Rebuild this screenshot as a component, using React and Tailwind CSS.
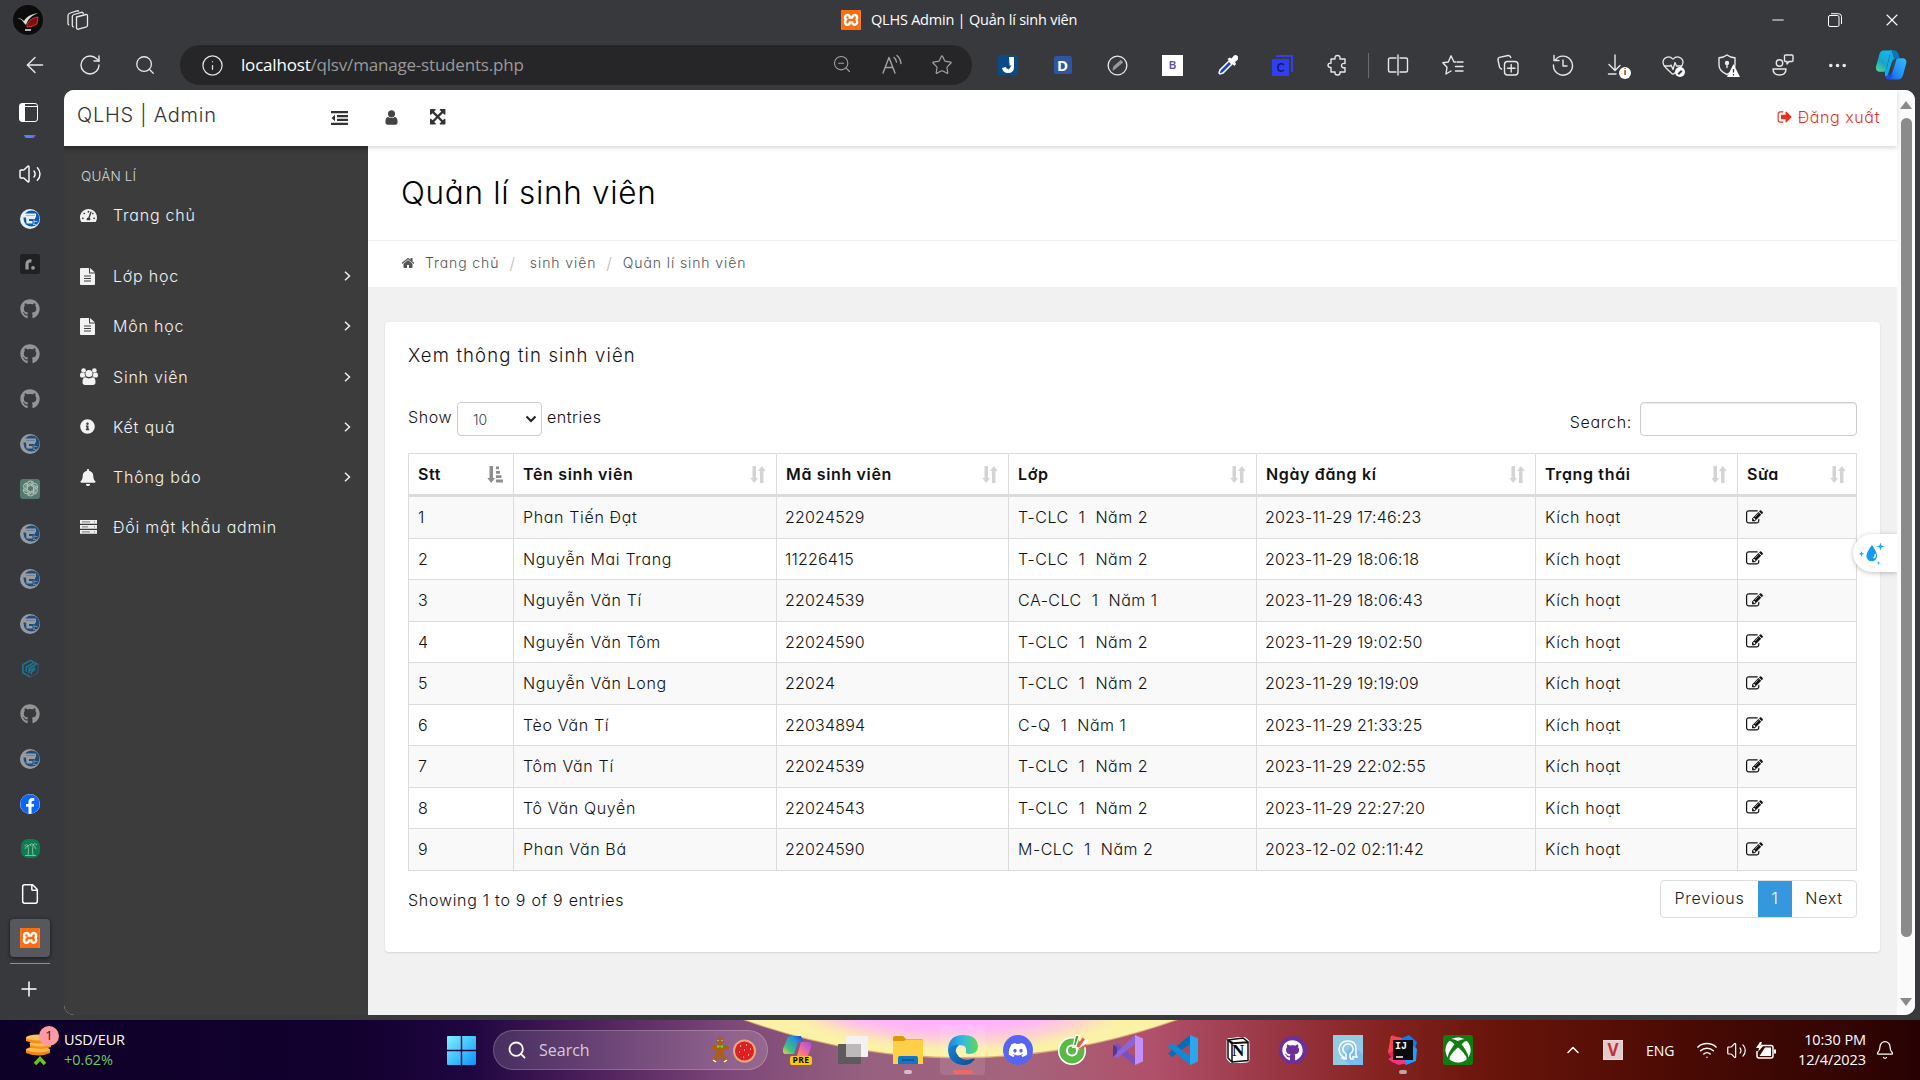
import React from "react";
import {
  ArrowLeft, RotateCw, Search, Info, ZoomOut, Star, HeartPulse, Ellipsis,
  Minus, X, Volume2, File, Plus, Wifi, Bell, ChevronUp,
} from "lucide-react";
import { FaGithub, FaDiscord, FaXbox, FaFacebook, FaTachometerAlt, FaInfoCircle, FaBell } from "react-icons/fa";
import { SiXampp } from "react-icons/si";

/* ---------- Admin page glyphs (1792-unit grid) ---------- */
const Glyph = ({ d, className }) => (
  <svg viewBox="0 0 1792 1792" fill="currentColor" className={className}><path d={d} /></svg>
);
const EDIT = "M888 1184l116-116-152-152-116 116v56h96v96h56zm440-720q-16-16-33 1l-350 350q-17 17-1 33t33-1l350-350q17-17 1-33zm80 594v190q0 119-84.5 203.5t-203.5 84.5h-832q-119 0-203.5-84.5t-84.5-203.5v-832q0-119 84.5-203.5t203.5-84.5h832q63 0 117 25 15 7 18 23 3 17-9 29l-49 49q-14 14-32 8-23-6-45-6h-832q-66 0-113 47t-47 113v832q0 66 47 113t113 47h832q66 0 113-47t47-113v-126q0-13 9-22l64-64q15-15 35-7t20 29zm-96-738l288 288-672 672h-288v-288zm444 132l-92 92-288-288 92-92q28-28 68-28t68 28l152 152q28 28 28 68t-28 68z";
const SIGNOUT = "M704 1440q0 4 1 20t.5 26.5-3 23.5-10 19.5-20.5 6.5h-320q-119 0-203.5-84.5t-84.5-203.5v-704q0-119 84.5-203.5t203.5-84.5h320q13 0 22.5 9.5t9.5 22.5q0 4 1 20t.5 26.5-3 23.5-10 19.5-20.5 6.5h-320q-66 0-113 47t-47 113v704q0 66 47 113t113 47h312l11.5 1 11.5 3 8 5.5 7 9 2 13.5zm928-544q0 26-19 45l-544 544q-19 19-45 19t-45-19-19-45v-288h-448q-26 0-45-19t-19-45v-384q0-26 19-45t45-19h448v-288q0-26 19-45t45-19 45 19l544 544q19 19 19 45z";
const HOME = "M1472 992v480q0 26-19 45t-45 19h-384v-384h-256v384h-384q-26 0-45-19t-19-45v-480q0-1 .5-3t.5-3l575-474 575 474q1 2 1 6zm223-69l-62 74q-8 9-21 11h-3q-13 0-21-7l-692-577-692 577q-12 8-24 7-13-2-21-11l-62-74q-8-10-7-23.5t11-21.5l719-599q32-26 76-26t76 26l244 204v-195q0-14 9-23t23-9h192q14 0 23 9t9 23v408l219 182q10 8 11 21.5t-7 23.5z";
const USER = "M1536 1399q0 109-62.5 187t-150.5 78h-854q-88 0-150.5-78t-62.5-187q0-85 8.5-160.5t31.5-152 58.5-131 94-89 134.5-34.5q131 128 313 128t313-128q76 0 134.5 34.5t94 89 58.5 131 31.5 152 8.5 160.5zm-256-887q0 159-112.5 271.5t-271.5 112.5-271.5-112.5-112.5-271.5 112.5-271.5 271.5-112.5 271.5 112.5 112.5 271.5z";
const ARROWS = "M1283 413l-355 355 355 355 144-144q29-31 70-14 39 17 39 59v448q0 26-19 45t-45 19h-448q-42 0-59-40-17-39 14-69l144-144-355-355-355 355 144 144q31 30 14 69-17 40-59 40h-448q-26 0-45-19t-19-45v-448q0-42 40-59 39-17 69 14l144 144 355-355-355-355-144 144q-19 19-45 19-12 0-24-5-40-17-40-59v-448q0-26 19-45t45-19h448q42 0 59 40 17 39-14 69l-144 144 355 355 355-355-144-144q-31-30-14-69 17-40 59-40h448q26 0 45 19t19 45v448q0 42-39 59-13 5-25 5-26 0-45-19z";

const Outdent = () => (
  <svg viewBox="0 0 17 14" className="h-[14px] w-[17px]" fill="#333">
    <path d="M0 0h17v2.3H0zM6 3.9h11v2.3H6zM6 7.8h11v2.3H6zM0 11.7h17V14H0zM4 3.7v6.5L.5 7z" />
  </svg>
);
const FileText = () => (
  <svg viewBox="0 0 15 17" className="h-[17px] w-[15px]">
    <path d="M1 0h8v5.5h6V16a1 1 0 0 1-1 1H1a1 1 0 0 1-1-1V1a1 1 0 0 1 1-1zM10 0l5 4.6h-5z" fill="#f2f2f2" />
    <path d="M4 8h7M4 10.5h7M4 13h7" stroke="#3c3c3c" strokeWidth="1" />
  </svg>
);
const Users = () => (
  <svg viewBox="0 0 18 17" className="h-[17px] w-[18px]" fill="#f2f2f2">
    <circle cx="3.6" cy="2.5" r="2.3" /><circle cx="14.4" cy="2.5" r="2.3" /><circle cx="9" cy="5.6" r="3.5" />
    <path d="M0 7.5C0 5.5.8 4.4 1.6 4.4c1 .8 2.2.8 3 .5.2 1.9.5 2.6 1.2 3.6-1 0-1.600.3-2.200 1H1.500C.5 9.500 0 8.800 0 7.500zM18 7.500c0-2-.8-3.100-1.600-3.100-1 .8-2.200.8-3 .5-.2 1.900-.5 2.600-1.200 3.600 1 0 1.600.3 2.200 1h2.100c1 0 1.500-.7 1.500-2zM2.500 14.300c0-3.200 1-5 3-5 1.800 1.500 5.200 1.500 7 0 2 0 3 1.800 3 5 0 1.700-1 2.700-2.500 2.700H5c-1.500 0-2.500-1-2.500-2.700z" />
  </svg>
);
const Server = () => (
  <svg viewBox="0 0 17 14" className="h-[14px] w-[17px]">
    <path d="M0 0h17v3.800H0zM0 5h17v3.800H0zM0 10h17v3.800H0z" fill="#eee" />
    <path d="M2 1.900h8M2 6.900h6M2 11.900h8M14 1.900h1M14 6.900h1M14 11.900h1" stroke="#777" strokeWidth="1" />
  </svg>
);
const SortBoth = () => (
  <svg viewBox="0 0 16 17" className="h-[17px] w-[16px]" fill="#d4d4d4">
    <path d="M2.500 0h3.500v12h2L4.200 17 .3 12h2.200zM10 17h3.500V5h2.300L11.800 0 8 5h2z" />
  </svg>
);
const SortAsc = () => (
  <svg viewBox="0 0 16 17" className="h-[17px] w-[16px]" fill="#8e8e8e">
    <path d="M2.500 0h3.500v12h2L4.200 17 .3 12h2.200zM9 .5h3v2.800H9zM9 5h4v2.800H9zM9 9.300h5.500v2.800H9zM9 13.600h7v2.900H9z" />
  </svg>
);

/* ---------- Browser chrome ---------- */
const Cell = ({ children }) => (
  <div className="relative flex w-[55px] shrink-0 items-center justify-center text-[#e8e8e8]">{children}</div>
);
const Xampp = ({ className }) => (
  <span className={`flex items-center justify-center bg-white ${className}`}>
    <SiXampp className="h-full w-full text-[#fb6d10]" />
  </span>
);
const S = ({ children, size = 22, vb = "0 0 22 22" }) => (
  <svg viewBox={vb} width={size} height={size} fill="none" stroke="currentColor" strokeWidth="1.4" strokeLinecap="round" strokeLinejoin="round">{children}</svg>
);

function TitleBar() {
  return (
    <div className="flex h-10 items-center">
      <div className="ml-[13px] flex h-[30px] w-[30px] items-center justify-center rounded-full bg-[#0c0c0d]">
        <svg viewBox="0 0 30 30" className="h-[30px] w-[30px]">
          <path d="M4 13c3 1 5 1 7 5l2 2c2-6 5-9 12-12-6 1-11 3-14 8-2-2-4-3-7-3z" fill="#ddd" />
          <path d="M14 20c2-5 5-7 11-8l-1 7-4 2-6 1z" fill="#7c1014" stroke="#e02b30" strokeWidth="1" />
          <path d="M12 25h6" stroke="#ddd" strokeWidth="1.600" />
        </svg>
      </div>
      <div className="ml-[24px] flex text-[#e8e8e8]">
        <svg viewBox="0 0 22 20" className="h-[20px] w-[22px]" fill="none" stroke="currentColor" strokeWidth="1.300" strokeLinejoin="round">
          <path d="M9.500 7l9.500-2.500q1.500-.3 1.500 1.200v9.500q0 1.200-1 1.600l-8 2.400q-1.800.3-2-1.200z" />
          <path d="M16.500 3.800Q16 2 14.500 2.300L7 4.500Q5.300 5 5.300 6.500v9q0 1.500 1.500 1.500" />
          <path d="M12 1.500Q11.300.5 10 .8L3.200 3Q1 3.700 1 5.500v8q0 1.200 1.200 1.500" />
        </svg>
      </div>
      <div className="ml-[752px] flex w-[300px] items-center gap-[10px]">
        <Xampp className="h-[20px] w-[20px] rounded-[2px]" />
        <span className="whitespace-nowrap font-['Open_Sans','Noto_Sans',sans-serif] text-[14.500px] tracking-[-0.220px] text-white">QLHS Admin | Quản lí sinh viên</span>
      </div>
      <div className="ml-auto flex items-center text-white">
        <div className="flex w-[57px] justify-center"><Minus size={18} strokeWidth={1.300} /></div>
        <div className="flex w-[57px] justify-center">
          <svg viewBox="0 0 14 14" className="h-[14px] w-[14px]" fill="none" stroke="white"><rect x=".5" y="2.500" width="10.500" height="11" rx="1.500" /><path d="M3 .7h7.500q3 0 3 3V11" /></svg>
        </div>
        <div className="flex w-[57px] justify-center"><X size={20} strokeWidth={1.300} /></div>
      </div>
    </div>
  );
}

function Toolbar() {
  return (
    <div className="flex h-[50px] items-stretch pl-[7px]">
      <Cell><ArrowLeft size={26} strokeWidth={1.300} /></Cell>
      <Cell><RotateCw size={24} strokeWidth={1.400} /></Cell>
      <Cell><Search size={22} strokeWidth={1.400} /></Cell>
      <div className="my-[5px] ml-[8px] flex w-[793px] items-center rounded-full bg-[#262628] pl-[21px] pr-[5px] text-[#e4e4e4]">
        <Info size={23} strokeWidth={1.300} />
        <div className="ml-[17px] whitespace-nowrap font-['Open_Sans','Noto_Sans',sans-serif] text-[17px] tracking-[-0.190px] text-[#9a9a9c]">
          <span className="text-white">localhost</span>/qlsv/manage-students.php
        </div>
        <div className="ml-auto flex text-[#a2a2a2]">
          <div className="flex w-[50px] justify-center"><ZoomOut size={20} strokeWidth={1.300} /></div>
          <div className="flex w-[50px] justify-center"><S><path d="M2 19L8 3.500 14 19M4.200 13.500h7.600M13 3.500q2 1.500 2.500 4.500M16 1.500q3.500 3 4 8" /></S></div>
          <div className="flex w-[50px] justify-center"><Star size={22} strokeWidth={1.300} /></div>
        </div>
      </div>
      <div className="flex pl-[8px]">
        <Cell>
          <svg viewBox="0 0 20 20" className="h-5 w-5"><rect width="20" height="20" fill="#0b4a88" /><path d="M11 2h5v10q0 6-6 6-5 0-6-5l4-1q0 2 2 2t1.500-3z" fill="#fff" /><path d="M11.500 8l-3 4.500h2.500l-1 3 3.500-5H11z" fill="#0b4a88" /></svg>
        </Cell>
        <Cell><span className="flex h-[18px] w-[18px] items-center justify-center rounded-[2px] bg-[#2f55a4] font-['Open_Sans',sans-serif] text-[15px] font-bold text-white">D</span></Cell>
        <Cell><S size={21}><circle cx="11" cy="11" r="9.800" /><path d="M6.500 15.500L7.500 12l7-6 1.500 1.500-7 6z" fill="#999" stroke="#999" /></S></Cell>
        <Cell><span className="flex h-[21px] w-[21px] items-center justify-center bg-white font-['Liberation_Sans',sans-serif] text-[10px] font-bold text-[#5650b5]">B</span></Cell>
        <Cell>
          <svg viewBox="0 0 20 20" className="h-5 w-5"><path d="M2 19l-1-1 1-3L11 6l3 3-9 9z" fill="#1744c8" stroke="#fff" strokeWidth="1.500" /><path d="M9.500 4l2-1.500 2 1 2.500-3q2-1 3.500.5t.5 3.500l-3 2.500 1 2-1.500 2z" fill="#fff" /></svg>
        </Cell>
        <Cell>
          <svg viewBox="0 0 21 21" className="h-[21px] w-[21px]"><path d="M4 0h17v17h-2V2H4z" fill="#303df0" /><rect y="4" width="17" height="17" fill="#303df0" /><path d="M12 9.800q-3-2-5.300 0-1.700 2.700 0 5.400 2.300 2 5.300 0" fill="none" stroke="#14196b" strokeWidth="1.600" /></svg>
        </Cell>
        <Cell><S><path d="M4 5h4q-.5-3.500 2.500-3.500T13 5h5v4.500q-3.500-.5-3.500 2t3.500 2.300V18h-5q.5 3-2.500 3T8 18H4v-4.500q-3 0-3-2.300t3-2z" /></S></Cell>
      </div>
      <div className="my-auto ml-[3px] h-[25px] w-px bg-[#6a6b6e]" />
      <div className="flex pl-[1px]">
        <Cell><S><path d="M9 4H3q-1.500 0-1.500 1.500v11Q1.500 18 3 18h6M13 4h6q1.500 0 1.500 1.500v11Q20.500 18 19 18h-6M11 1v20" /></S></Cell>
        <Cell><S><path d="M13.500 8H12L9 1.800 6.300 8 .8 8.800l4.200 4.500L4 20l5-3M15 8h6M13.500 12.500H21M13.500 17H21" /></S></Cell>
        <Cell><S><rect x="7.500" y="7.500" width="13.500" height="13.500" rx="3" /><path d="M14.200 10.500v7.500M10.500 14.200H18M4.500 15Q3 14.500 2.500 13L1 6q-.3-2 1.500-2.600L11 1.500q2-.3 2.800 2" /></S></Cell>
        <Cell><S><path d="M3 6.500A9.500 9.500 0 1 1 1.500 11M2 1.500v5h5M11 6v6h4" /></S></Cell>
        <Cell>
          <S><path d="M8 1v15M2 10.500L8 16.500l5-5M1.500 20H9" /></S>
          <span className="absolute left-[29px] top-[27px] flex h-[12px] w-[12px] items-center justify-center rounded-full bg-white font-['Liberation_Sans',sans-serif] text-[9px] font-bold text-[#38393c]">i</span>
        </Cell>
        <Cell>
          <HeartPulse size={24} strokeWidth={1.300} />
          <span className="absolute left-[30px] top-[27px] flex h-[10px] w-[10px] items-center justify-center rounded-full bg-white"><span className="h-[5px] w-[2px] rotate-45 bg-[#38393c]" /></span>
        </Cell>
        <Cell>
          <S><path d="M10 1q3 2.500 8 2.800V11q0 6-8 9.500Q2 17 2 11V3.800Q7 3.500 10 1z" /><circle cx="10" cy="9" r="1.500" fill="currentColor" /><path d="M10 10v3.500" /></S>
          <svg viewBox="0 0 13 13" className="absolute left-[27px] top-[24px] h-[13px] w-[13px]"><path d="M6.500 0L13 13H0z" fill="#fff" /><path d="M6.500 5v3.500M6.500 10v1.500" stroke="#38393c" strokeWidth="1.300" /></svg>
        </Cell>
        <Cell><S><circle cx="7.500" cy="9" r="3.200" /><path d="M1 15h13q0 6-6.500 6T1 15zM12.500 2q0-1 1-1H20q1 0 1 1v4.500q0 1-1 1h-3l-2 2.500V7.500h-1.500q-1 0-1-1z" /></S></Cell>
        <Cell><Ellipsis size={23} strokeWidth={1.800} /></Cell>
        <Cell>
          <svg viewBox="0 0 32 30" className="-ml-[3px] h-[32px] w-[31px]">
            <defs>
              <linearGradient id="cp1" x1="0" y1="1" x2=".6" y2="0"><stop offset="0" stopColor="#63d98a" /><stop offset=".5" stopColor="#14a6c8" /><stop offset="1" stopColor="#14b8f2" /></linearGradient>
              <linearGradient id="cp2" x1="0" y1="1" x2="1" y2="0"><stop offset="0" stopColor="#1a50e8" /><stop offset=".4" stopColor="#1f8cf5" /><stop offset="1" stopColor="#35bcff" /></linearGradient>
            </defs>
            <path d="M17 8h10q5 0 4.300 5L28 25q-1.500 5-5.500 5H12q3 0 4-4z" fill="url(#cp2)" />
            <path d="M9 21h6l2 4q-1 5-4 5-3.500-1-4-5z" fill="#1a4fe6" />
            <path d="M8 0h9q-2 1-3 5l-3 13q-1 4-4 4H3q-4-1-2.800-6L3.500 4Q4.500 0 8 0z" fill="url(#cp1)" />
            <path d="M14 0h4q4 0 5 4l1 4h-4q-2.500 0-3.500 4l-3.500 12q-1 2.500-3.500 2.500L9 21q2-1 2.500-4l3-13z" fill="#14a9e8" />
            <path d="M16 0h3q3.500 0 4.500 4l1 4h-6z" fill="#0b5fa0" opacity=".7" />
            <path d="M17 11q1-3 3.500-3h1L17.500 21q-1 3-4 5l-1-2z" fill="#38393c" opacity=".85" />
          </svg>
        </Cell>
      </div>
    </div>
  );
}

const ELogo = ({ dim }) => (
  <svg viewBox="0 0 20 20" className={dim ? "h-5 w-5 opacity-55" : "h-5 w-5"}>
    <circle cx="10" cy="10" r="10" fill="#e8eef5" /><circle cx="11.500" cy="9.500" r="8" fill="#0b5cb0" />
    <path d="M4 4.500h12v4H3.500zM6 8h9v2H9v2h3.500v2.500H6.500z" fill="#e8eef5" />
    <path d="M6 6.500h9M14 10.500v5M14 12.500h3.500M13 15.500h3.500" stroke="#9cc0e4" strokeWidth="1" fill="none" />
  </svg>
);
const Tab = ({ children }) => <div className="flex h-[45px] items-center justify-center">{children}</div>;
const Git = () => <FaGithub className="h-5 w-5 text-[#949494]" />;

function TabStrip() {
  return (
    <div className="flex w-[64px] flex-col pr-[4px] text-white">
      <div className="flex h-[42px] items-end justify-center">
        <div className="-ml-[3px] mb-[10px] flex h-[19px] w-[19px] rounded-[3px] border-[1.500px] border-white"><div className="w-[5px] bg-white" /><div className="h-[3px] flex-1 border-b border-white" /></div>
      </div>
      <div className="flex h-[19px] justify-center"><div className="mt-[3px] h-[3px] w-[12px] rounded-bl bg-gradient-to-r from-[#1a9bff] to-[#7058f0] [clip-path:polygon(0_0,100%_0,80%_100%,10%_100%)]" /></div>
      <Tab><Volume2 size={24} strokeWidth={1.400} /></Tab>
      <Tab><ELogo /></Tab>
      <Tab><span className="flex h-5 w-5 items-center justify-center rounded-[2px] bg-[#202122]"><svg viewBox="0 0 20 20" className="h-5 w-5"><path d="M7 15.500V10q0-3.500 4.500-3" stroke="#999" strokeWidth="3.200" fill="none" /><circle cx="13" cy="13.800" r="1.900" fill="#999" /></svg></span></Tab>
      <Tab><Git /></Tab><Tab><Git /></Tab><Tab><Git /></Tab>
      <Tab><ELogo dim /></Tab>
      <Tab>
        <span className="flex h-5 w-5 items-center justify-center rounded-[3px] bg-[#547a6e]">
          <svg viewBox="-10 -10 20 20" className="h-[17px] w-[17px]" fill="none" stroke="#b4bfba" strokeWidth="1.200">
            {[0, 60, 120, 180, 240, 300].map((a) => <path key={a} transform={`rotate(${a})`} d="M-3.500 1.500V-5Q-3.500-8.500 0-8.700 2.500-8.700 3.800-7M-3.500-4L2.500-7.500" />)}
          </svg>
        </span>
      </Tab>
      <Tab><ELogo dim /></Tab><Tab><ELogo dim /></Tab><Tab><ELogo dim /></Tab>
      <Tab>
        <svg viewBox="0 0 20 20" className="h-[19px] w-[19px]" fill="none" stroke="#1b7898" strokeWidth="1.600"><path d="M18 6L10 1.500 2 6v8.500l8 4.500" /><path d="M10 19l8-4.500V6" stroke="#34496e" /><path d="M5.500 13.500V8.500L13 4M8.500 15V9.800l7-4M8.500 12.500l6-3.500M11 16v-2.500l4-2.500" /></svg>
      </Tab>
      <Tab><Git /></Tab><Tab><ELogo dim /></Tab>
      <Tab><span className="rounded-full bg-white"><FaFacebook className="h-[20px] w-[20px] text-[#0866ff]" /></span></Tab>
      <div className="flex h-[44px] items-center justify-center">
        <svg viewBox="0 0 19 19" className="h-[19px] w-[19px]"><rect width="19" height="19" rx="7" fill="#0c7d50" /><path d="M7 16q1-5 0-9M12 16q-1-5 0-10M3.500 7Q6 4 7 7q2-3 3.500 0M9 6q2.500-3 3 0 2-3 4 0M4 10q1-3 3-3M15 10q-1-3-3-4M4 16.500h11" stroke="#a3c9b5" strokeWidth=".8" fill="none" /></svg>
      </div>
      <div className="mt-[1px] flex h-[45px] items-center justify-center"><File size={22} strokeWidth={1.600} /></div>
      <div className="mt-[3px] flex h-[38px] items-center justify-center"><div className="flex h-[38px] w-[40px] items-center justify-center rounded-[4px] bg-[#57585d] shadow-[0_1px_4px_rgba(0,0,0,0.6)]"><Xampp className="h-[20px] w-[20px] rounded-[2px]" /></div></div>
      <div className="mx-auto mt-[6px] h-px w-[40px] bg-[#8d8e91]" />
      <div className="mt-[13px] flex justify-center"><Plus size={24} strokeWidth={1.500} className="-ml-[2px]" /></div>
    </div>
  );
}

/* ---------- Admin page ---------- */
const MENU = [
  { icon: <FaTachometerAlt className="h-[17px] w-[17px]" />, label: "Trang chủ" },
  { icon: <FileText />, label: "Lớp học", sub: true },
  { icon: <FileText />, label: "Môn học", sub: true },
  { icon: <Users />, label: "Sinh viên", sub: true },
  { icon: <FaInfoCircle className="h-[15px] w-[15px]" />, label: "Kết quả", sub: true },
  { icon: <FaBell className="h-[17px] w-[16px]" />, label: "Thông báo", sub: true },
  { icon: <Server />, label: "Đổi mật khẩu admin" },
];
const COLS = [
  ["Stt", "w-[105px]"], ["Tên sinh viên", "w-[263px]"], ["Mã sinh viên", "w-[232px]"], ["Lớp", "w-[248px]"],
  ["Ngày đăng kí", "w-[279px]"], ["Trạng thái", "w-[202px]"], ["Sửa", "w-[119px]"],
];
const ROWS = [
  ["Phan Tiến Đạt", "22024529", "T-CLC  1  Năm 2", "2023-11-29 17:46:23"],
  ["Nguyễn Mai Trang", "11226415", "T-CLC  1  Năm 2", "2023-11-29 18:06:18"],
  ["Nguyễn Văn Tí", "22024539", "CA-CLC  1  Năm 1", "2023-11-29 18:06:43"],
  ["Nguyễn Văn Tôm", "22024590", "T-CLC  1  Năm 2", "2023-11-29 19:02:50"],
  ["Nguyễn Văn Long", "22024", "T-CLC  1  Năm 2", "2023-11-29 19:19:09"],
  ["Tèo Văn Tí", "22034894", "C-Q  1  Năm 1", "2023-11-29 21:33:25"],
  ["Tôm Văn Tí", "22024539", "T-CLC  1  Năm 2", "2023-11-29 22:02:55"],
  ["Tô Văn Quyền", "22024543", "T-CLC  1  Năm 2", "2023-11-29 22:27:20"],
  ["Phan Văn Bá", "22024590", "M-CLC  1  Năm 2", "2023-12-02 02:11:42"],
];

function AdminSidebar() {
  return (
    <aside className="w-[304px] shrink-0 bg-[#3c3c3c] pt-[19px] text-[#f2f2f2] shadow-[inset_0_8px_8px_-8px_#222]">
      <div className="h-[22px] pl-[17px] text-[13.500px] leading-[22px] tracking-[0.150px] text-[#d4d4d4]">QUẢN LÍ</div>
      <nav>
        {MENU.map((m, i) => (
          <div key={m.label} className={`flex h-[50.200px] items-center pl-[16px] pr-[17px] ${i === 0 ? "mt-[3px] mb-[11px]" : ""}`}>
            <span className="flex w-[33px]">{m.icon}</span>
            <span className="text-[16px] leading-[24px] tracking-[0.780px]">{m.label}</span>
            {m.sub && <svg viewBox="0 0 7 10" className="ml-auto h-[10px] w-[7px]" fill="none" stroke="#eee" strokeWidth="1.500"><path d="M1 .7L5.500 5 1 9.300" /></svg>}
          </div>
        ))}
      </nav>
    </aside>
  );
}

function StudentTable() {
  return (
    <table className="w-[1448px] table-fixed border-collapse text-[16px] text-[#111]">
      <thead>
        <tr className="h-[42px]">
          {COLS.map(([name, w], i) => (
            <th key={name} className={`${w} border border-b-[3px] border-[#dcdcdc] p-0 text-left font-semibold`}>
              <div className="flex items-center justify-between pl-[9px] pr-[10px] text-[16px] leading-[24px] tracking-[0.650px]">
                <span className="whitespace-nowrap">{name}</span>{i === 0 ? <SortAsc /> : <SortBoth />}
              </div>
            </th>
          ))}
        </tr>
      </thead>
      <tbody>
        {ROWS.map((r, i) => (
          <tr key={i} className="h-[41.500px] odd:bg-[#f9f9f9] first:h-[42.500px]">
            <td className="border border-[#dcdcdc] p-0 pl-[9px]">{i + 1}</td>
            <td className="border border-[#dcdcdc] p-0 pl-[9px] tracking-[0.650px]">{r[0]}</td>
            <td className="border border-[#dcdcdc] p-0 pl-[8px] tracking-[0.200px]">{r[1]}</td>
            <td className="whitespace-pre border border-[#dcdcdc] p-0 pl-[9px] tracking-[0.500px]">{r[2]}</td>
            <td className="border border-[#dcdcdc] p-0 pl-[8px] tracking-[0.200px]">{r[3]}</td>
            <td className="border border-[#dcdcdc] p-0 pl-[9px] tracking-[0.600px]">Kích hoạt</td>
            <td className="border border-[#dcdcdc] p-0 pl-[8px]"><Glyph d={EDIT} className="h-[17px] w-[17px]" /></td>
          </tr>
        ))}
      </tbody>
    </table>
  );
}

function AdminPage() {
  return (
    <div className="relative flex h-[925px] w-[1851px] overflow-hidden rounded-[10px] bg-white font-['Inter','Open_Sans',sans-serif] font-[350] text-[#111] [font-feature-settings:'cv11']">
      <div className="flex w-[1833px] flex-col">
        <header className="z-10 flex h-[56px] shrink-0 items-center bg-white shadow-[0_2px_5px_rgba(0,0,0,0.15)]">
          <div className="-mt-[6px] w-[267px] pl-[13px] text-[20px] tracking-[0.750px] text-[#333]">QLHS | Admin</div>
          <Outdent />
          <Glyph d={USER} className="-mt-[2px] ml-[35px] h-[17px] w-[17px] text-[#444]" />
          <Glyph d={ARROWS} className="ml-[30px] h-[18px] w-[18px] text-[#333]" />
          <div className="-mt-[2px] ml-auto flex items-center pr-[17px] text-[16px] tracking-[0.550px] text-[#e8301c]">
            <Glyph d={SIGNOUT} className="mr-[5px] h-[16px] w-[16px]" />Đăng xuất
          </div>
        </header>
        <div className="flex flex-1">
          <AdminSidebar />
          <main className="flex-1 bg-[#f1f1f1]">
            <div className="flex h-[95px] items-center border-b border-[#eee] bg-white pl-[33px] text-[31.500px] tracking-[0.700px] text-black">Quản lí sinh viên</div>
            <div className="flex h-[46px] items-center bg-white pb-[3px] pl-[33px] text-[14px] tracking-[0.900px] text-[#555]">
              <Glyph d={HOME} className="mr-[10px] h-[14px] w-[14px]" />
              <span>Trang chủ</span><span className="mx-[10px] text-[16px] text-[#bbb]">/</span>
              <span className="ml-[4px]">sinh viên</span><span className="mx-[10px] text-[16px] text-[#bbb]">/</span><span>Quản lí sinh viên</span>
            </div>
            <section className="ml-[17px] mt-[35px] h-[630px] w-[1495px] rounded-[4px] bg-white pl-[23px] pt-[20px] shadow-[0_1px_2px_rgba(0,0,0,0.12)]">
              <h2 className="text-[18.500px] leading-[27px] tracking-[1.150px]">Xem thông tin sinh viên</h2>
              <div className="mt-[33px] flex h-[34px] w-[1449px] text-[16px] tracking-[0.550px]">
                <span className="-mt-[1px] leading-[32px]">Show</span>
                <div className="ml-[5px] flex h-[34px] w-[85px] items-center justify-between rounded-[4px] border border-[#ccc] pl-[15px] pr-[4px] text-[14px] tracking-normal text-[#444]">
                  10
                  <svg viewBox="0 0 12 8" className="h-[8px] w-[12px]" fill="none" stroke="#222" strokeWidth="2"><path d="M1.500 1.500L6 6l4.500-4.500" /></svg>
                </div>
                <span className="-mt-[1px] ml-[5px] leading-[32px]">entries</span>
                <span className="ml-auto leading-[40px] tracking-[0.700px]">Search:</span>
                <div className="ml-[8px] h-[34px] w-[217px] rounded-[4px] border border-[#ccc] shadow-[inset_0_1px_1px_rgba(0,0,0,0.075)]" />
              </div>
              <div className="mt-[17px]"><StudentTable /></div>
              <div className="mt-[9px] flex w-[1449px] justify-between">
                <div className="text-[16px] leading-[40px] tracking-[0.720px]">Showing 1 to 9 of 9 entries</div>
                <div className="flex h-[38px] overflow-hidden rounded-[4px] border border-[#ddd] text-[16px] leading-[35px] tracking-[0.700px] text-[#222]">
                  <span className="w-[97px] text-center">Previous</span>
                  <span className="-my-px w-[34px] bg-[#3598dc] text-center leading-[37px] text-white">1</span>
                  <span className="w-[64px] text-center">Next</span>
                </div>
              </div>
            </section>
          </main>
        </div>
      </div>
      <div className="flex w-[18px] flex-col items-center bg-[#fbfbfb] pt-[11px] pb-[9px]">
        <svg viewBox="0 0 12 8" className="h-[8px] w-[12px] shrink-0"><path d="M6 0l6 8H0z" fill="#8b8b8b" /></svg>
        <div className="mt-[9px] h-[819px] w-[11px] rounded-full bg-[#8b8b8b]" />
        <svg viewBox="0 0 12 8" className="mt-auto h-[8px] w-[12px] shrink-0"><path d="M6 8l6-8H0z" fill="#8b8b8b" /></svg>
      </div>
      <div className="absolute left-[1789px] top-[444px] z-20 h-[38px] w-[44px] rounded-l-full bg-white shadow-[0_1px_5px_rgba(0,0,0,0.25)] [clip-path:inset(-8px_0_-8px_-8px)]">
        <svg viewBox="0 0 44 38" className="h-[38px] w-[44px]">
          <path d="M19 11q5 7 5 11a5.300 5.300 0 0 1-10.600 0Q13.500 18 19 11z" fill="#149bf3" /><path d="M20.500 24q2.500-1 1.500-4" stroke="#fff" strokeWidth="1.400" fill="none" />
          <path d="M27.500 8.500l1 3 3 1-3 1-1 3-1-3-3-1 3-1zM8.500 17l.8 2 2 .8-2 .8-.8 2.400-.8-2.400-2-.8 2-.8zM25.500 27l.5 1.500 1.500.5-1.500.5-.5 1.500-.5-1.500-1.500-.5 1.500-.5z" fill="#27a9f5" />
        </svg>
      </div>
    </div>
  );
}

/* ---------- Taskbar ---------- */
function Wallpaper() {
  return (
    <svg viewBox="0 0 1920 60" preserveAspectRatio="none" className="absolute inset-0 h-full w-full">
      <defs>
        <linearGradient id="wp" x1="0" x2="1">
          <stop offset="0" stopColor="#0e0128" /><stop offset=".18" stopColor="#12002e" /><stop offset=".245" stopColor="#1f0640" />
          <stop offset=".3" stopColor="#481c58" /><stop offset=".38" stopColor="#7d4779" /><stop offset=".45" stopColor="#96607f" />
          <stop offset=".53" stopColor="#a5647c" /><stop offset=".6" stopColor="#b0506a" /><stop offset=".66" stopColor="#9b3846" />
          <stop offset=".72" stopColor="#842220" /><stop offset=".78" stopColor="#68140a" /><stop offset=".87" stopColor="#4c0b04" /><stop offset="1" stopColor="#270202" />
        </linearGradient>
        <clipPath id="arc"><path d="M746 0Q850 37 960 37T1175 0z" /></clipPath>
        <filter id="soft" x="-20%" y="-60%" width="140%" height="220%"><feGaussianBlur stdDeviation="14 4" /></filter>
      </defs>
      <rect width="1920" height="60" fill="url(#wp)" />
      <path d="M743 0Q850 38.500 960 38.500T1178 0z" fill="#d9a878" />
      <path d="M746 0Q850 37 960 37T1175 0z" fill="#fbf2a6" />
      <g clipPath="url(#arc)">
        <path d="M815-20V0Q870 24 960 25T1100 0V-20z" fill="#fdd0d4" filter="url(#soft)" />
        <path d="M840-20V0Q890 13 950 14T1060 0V-20z" fill="#ffb4fb" filter="url(#soft)" />
      </g>
    </svg>
  );
}
const App55 = ({ children }) => <div className="relative flex h-[60px] w-[55px] items-center justify-center">{children}</div>;

function Taskbar() {
  return (
    <div className="relative flex h-[60px] items-center overflow-hidden bg-[#12002e] font-['Open_Sans','Noto_Sans',sans-serif] text-white">
      <Wallpaper />
      <div className="relative flex w-[447px] items-center pl-[25px]">
        <svg viewBox="0 0 34 32" className="h-[32px] w-[34px]">
          <path d="M1 15q11 3.500 24 0v4q-11 5-24 0z" fill="#e9860f" /><ellipse cx="13" cy="15.500" rx="12" ry="3" fill="#ffb648" />
          <path d="M5 9q10 4 21 0v4q-10 4-21 0z" fill="#f09420" /><ellipse cx="15" cy="9.500" rx="10.500" ry="3" fill="#ffb94e" />
          <path d="M1 3q11 4 24 0v4q-11 5-24 0z" fill="#ef9019" /><ellipse cx="13" cy="3.500" rx="12" ry="3" fill="#ffc15a" />
          <path d="M10 30l5-5.500 5 5.500" fill="none" stroke="#6cc417" strokeWidth="3.500" />
        </svg>
        <span className="absolute left-[39px] top-[-4px] flex h-[20px] w-[20px] items-center justify-center rounded-full bg-[#ff99a4] text-[13px] text-[#222]">1</span>
        <div className="ml-[5px] text-[14.500px] leading-[20px] tracking-[-0.150px]"><div>USD/EUR</div><div className="tracking-normal text-[#6ccb5f]">+0.62%</div></div>
      </div>
      <svg viewBox="0 0 29 29" className="relative h-[29px] w-[29px]">
        <defs><linearGradient id="win" x1="0" y1="0" x2="1" y2="1"><stop offset="0" stopColor="#7ff2ff" /><stop offset="1" stopColor="#0b93fb" /></linearGradient></defs>
        <path d="M1 0h12.800v13.800H0V1q0-1 1-1zM15.200 0H28q1 0 1 1v12.800H15.200zM0 15.200h13.800V29H1q-1 0-1-1zM15.200 15.200H29V28q0 1-1 1H15.200z" fill="url(#win)" />
      </svg>
      <div className="relative ml-[17px] flex h-[40px] w-[275px] items-center rounded-full border border-white/20 bg-white/15 pl-[13px] pr-[11px]">
        <Search size={20} strokeWidth={2.200} />
        <span className="ml-[12px] text-[16px] tracking-[0] text-[#d6cad9]">Search</span>
        <svg viewBox="0 0 46 26" className="ml-auto h-[26px] w-[46px]">
          <path d="M10 0q3.500 0 3.500 3.500T12 8l6 1q2 1 1 3l-5 1v5l4 4q0 3-3 3l-5-5-5 5q-3 0-3-3l4-4v-5l-5-1q-1-2 1-3l6-1Q6.500 6 6.500 3.500T10 0z" fill="#a8611c" />
          <path d="M7 8l3 1 3-1v3l-3-1-3 1z" fill="#73d216" /><path d="M10 13v1M10 16v1" stroke="#d84315" strokeWidth="2" /><path d="M8 4v-.5M12 4v-.5" stroke="#fff" strokeWidth="1.500" /><path d="M3 23l3 2M17 23l-3 2" stroke="#fff" strokeWidth="1.500" />
          <circle cx="34.500" cy="14" r="11.500" fill="#eaa77c" /><circle cx="34.500" cy="14" r="9.500" fill="#de1f26" />
          <path d="M30 9h1M36 8h1M40 12h1M34 13h1M29 15h1M38 18h1M33 20h1" stroke="#ffd0a0" strokeWidth="1.500" />
        </svg>
      </div>
      <div className="relative ml-[2px] flex">
        <App55>
          <svg viewBox="0 0 30 30" className="h-[30px] w-[30px]">
            <defs><linearGradient id="pc" x1="0" y1="1" x2="1" y2="0"><stop offset="0" stopColor="#ffd23e" /><stop offset=".3" stopColor="#3fc17c" /><stop offset=".7" stopColor="#2392dc" /><stop offset="1" stopColor="#1c3ec8" /></linearGradient>
            <linearGradient id="pd" x1="1" y1="0" x2="0" y2="1"><stop offset="0" stopColor="#a44de8" /><stop offset=".6" stopColor="#f06a9d" /><stop offset="1" stopColor="#ff9b4c" /></linearGradient></defs>
            <path d="M8 1h10l2 6h-5l-4 12H2q-3-1-2-5L4 4q1-3 4-3z" fill="url(#pc)" /><path d="M18 7h8q3 1 2 5l-3 9H14z" fill="url(#pd)" />
          </svg>
          <span className="absolute left-[20px] top-[36px] flex h-[9px] w-[22px] items-center justify-center rounded-[2px] bg-[#ffc800] text-[8.500px] font-bold leading-none tracking-[0.500px] text-black">PRE</span>
        </App55>
        <App55><svg viewBox="0 0 30 30" className="h-[30px] w-[30px]"><rect x="0" y="9" width="23" height="20" rx="1" fill="#5d5a5c" /><rect x="8" y="1" width="22" height="21" rx="1" fill="#f4f1f3" /><rect x="8" y="9" width="15" height="13" fill="#bdb9bb" /></svg></App55>
        <App55>
          <svg viewBox="0 0 30 28" className="h-[28px] w-[30px]"><path d="M0 2q0-2 2-2h8l3 3h15q2 0 2 2v8H0z" fill="#d99a07" /><path d="M0 5h11l2-1.500h15q2 0 2 2V28H0z" fill="#ffcf48" /><path d="M5 28v-6q0-2 2-2h16q2 0 2 2v6z" fill="#0f76c8" /><path d="M9 24h12" stroke="#0a4f92" strokeWidth="1.400" /></svg>
          <span className="absolute bottom-[6px] h-[4px] w-[8px] rounded-full bg-[#d9b9c9]" />
        </App55>
        <App55>
          <span className="absolute left-[5px] top-[5px] h-[50px] w-[45px] rounded-[4px] bg-white/10" />
          <svg viewBox="0 0 30 30" className="relative h-[30px] w-[30px]">
            <defs><linearGradient id="e1" x1="0" x2="1"><stop offset="0" stopColor="#1f86d8" /><stop offset=".5" stopColor="#34b9df" /><stop offset="1" stopColor="#5fdb52" /></linearGradient><linearGradient id="e2" x1="0" x2="1" y2="1"><stop offset="0" stopColor="#1585dc" /><stop offset="1" stopColor="#0c4a94" /></linearGradient></defs>
            <path d="M0 14Q1 0 15 0q14 0 15 11 0 8-9 8-4 0-3-3 1-6-6-6Q4 10 0 14z" fill="url(#e1)" />
            <path d="M0 14q4-5 11-4-4 3-3 8 2 8 12 8 4 0 7-2-5 7-13 6Q0 28 0 14z" fill="url(#e2)" />
            <path d="M11 10q-6 5 0 12 6 5 13 2 2-1 3 0-3 3-9 2Q7 24 8 16q0-4 3-6z" fill="#0b4f9e" />
          </svg>
          <span className="absolute bottom-[6px] h-[4px] w-[20px] rounded-full bg-[#f2675f]" />
        </App55>
        <App55><span className="flex h-[30px] w-[30px] items-center justify-center rounded-full bg-[#5865f2]"><FaDiscord className="h-[20px] w-[20px]" /></span></App55>
        <App55>
          <svg viewBox="0 0 30 30" className="h-[30px] w-[30px]"><circle cx="14" cy="16" r="14" fill="#fff" /><circle cx="14" cy="16" r="12.500" fill="#58b947" /><circle cx="14" cy="15.500" r="6" fill="#fff" /><circle cx="14" cy="15.500" r="4" fill="#58b947" /><path d="M14 13l3-13h5l-4 13zM18 13l9-10 3 4-9 8z" fill="#fff" /><path d="M16 10l2-9 2.500 0-3 9z" fill="#3fa63c" /><path d="M18.500 11.500l6-9 2.500 2-6 8zM20 14l8-5 1 2.500-8 3z" fill="#ee5a3c" /></svg>
        </App55>
        <App55>
          <svg viewBox="0 0 30 30" className="h-[30px] w-[30px]"><path d="M0 11l4-3 18 15v7L4 16l-4 5z" fill="#7a4fc0" /><path d="M0 21l4 2L22 9V0L4 17z" fill="#8f63d8" /><path d="M0 10v12l4-4V12z" fill="#563596" /><path d="M22 0l8 3.500v23L22 30z" fill="#c490f5" /></svg>
        </App55>
        <App55>
          <svg viewBox="0 0 30 30" className="h-[30px] w-[30px]"><path d="M22 0v9L4 22l-4-3.500z" fill="#0a6cb4" /><path d="M22 30v-9L4 8 0 11.500z" fill="#1289d2" /><path d="M22 0l8 3.500v23L22 30z" fill="#2aa7ee" /></svg>
        </App55>
        <App55>
          <svg viewBox="0 0 24 26" className="h-[26px] w-[24px]"><path d="M1 2L17 0q2 0 6 4v19q0 2-2 2L6 26q-2 0-5-4z" fill="#fff" stroke="#fff" /><path d="M2 3l15-2 5 4-15 1zM2 3v18l4 4V7zM6 6.500L22 5.500v18L6 25z" fill="#fff" stroke="#111" strokeWidth="1.500" /></svg>
          <span className="absolute left-[22px] top-[21px] font-['Liberation_Serif',serif] text-[17px] font-bold leading-[20px] text-black">N</span>
        </App55>
        <App55><span className="flex h-[28px] w-[28px] items-center justify-center rounded-full bg-[#6e2f9c]"><FaGithub className="h-[21px] w-[21px]" /></span></App55>
        <App55>
          <svg viewBox="0 0 30 30" className="h-[30px] w-[30px]"><rect width="30" height="30" fill="#93cbe0" /><path d="M20 10l10 10v10H17L8 22z" fill="#7bbcec" /><path d="M8 23h4q-6-3-6-9 1-8 9-8t8 8v6l1 2h-5" stroke="#fff" strokeWidth="1.500" fill="none" /><path d="M10 24h3v-5q-4-3-3-6 1-4 5-4t5 4q1 3-3 6v3l1 2h3" stroke="#fff" strokeWidth="1.500" fill="none" /></svg>
        </App55>
        <App55>
          <svg viewBox="0 0 30 30" className="h-[30px] w-[30px]"><path d="M3 1l11 2-5 12L0 18z" fill="#fc801d" /><path d="M4 0l10 4-8 22-6-8z" fill="#fe2d6a" opacity=".8" /><path d="M14 3l7-3 8 7-2 7-13-6z" fill="#087cfa" /><path d="M22 8l7 6-1 12-10 4-8-7z" fill="#1aa0ff" /><path d="M0 24l10-5 9 9-8 2-7-3z" fill="#f9317f" /><rect x="5" y="5" width="20" height="20" fill="#0b0b0d" /><path d="M8 22h7" stroke="#fff" strokeWidth="1.500" /></svg>
          <span className="absolute left-[20px] top-[21px] font-['Liberation_Mono',monospace] text-[10px] font-bold leading-[12px]">IJ</span>
          <span className="absolute bottom-[6px] h-[4px] w-[8px] rounded-full bg-[#c4a3a3]" />
        </App55>
        <App55><span className="flex h-[30px] w-[30px] items-center justify-center rounded-[3px] bg-[#117c10]"><FaXbox className="h-[26px] w-[26px]" /></span></App55>
      </div>
      <div className="relative ml-auto flex items-center">
        <ChevronUp size={20} strokeWidth={1.800} />
        <span className="ml-[20px] flex h-[20px] w-[20px] items-center justify-center border border-[#f3d6d6] bg-[#e3cccc] text-[17px] font-bold text-[#c2303a]">V</span>
        <span className="ml-[23px] w-[30px] text-[14px] tracking-[0]">ENG</span>
        <Wifi size={22} strokeWidth={1.600} className="ml-[20px]" />
        <Volume2 size={21} strokeWidth={1.400} className="ml-[8px]" />
        <svg viewBox="0 0 20 17" className="ml-[9px] h-[17px] w-[20px]"><path d="M5 3.500h10q2 0 2 2V14q0 2-2 2H3q-2 0-2-2V9" fill="none" stroke="#fff" strokeWidth="1.500" /><path d="M9 5.500h6V14H3.500zM18 7.500h2v4h-2z" fill="#fff" /><path d="M4 0L0 6h3L2 10l5-6H4.500L6 0z" fill="#fff" /></svg>
        <div className="ml-[14px] w-[76px] whitespace-nowrap text-right text-[14.500px] leading-[20px] tracking-[-0.080px]"><div>10:30 PM</div><div>12/4/2023</div></div>
        <Bell size={20} strokeWidth={1.500} className="ml-[9px] mr-[25px]" />
      </div>
    </div>
  );
}

export default function App() {
  return (
    <div className="flex h-[1080px] w-[1920px] flex-col overflow-hidden bg-[#38393c]">
      <TitleBar />
      <Toolbar />
      <div className="flex h-[930px]">
        <TabStrip />
        <AdminPage />
      </div>
      <Taskbar />
    </div>
  );
}
